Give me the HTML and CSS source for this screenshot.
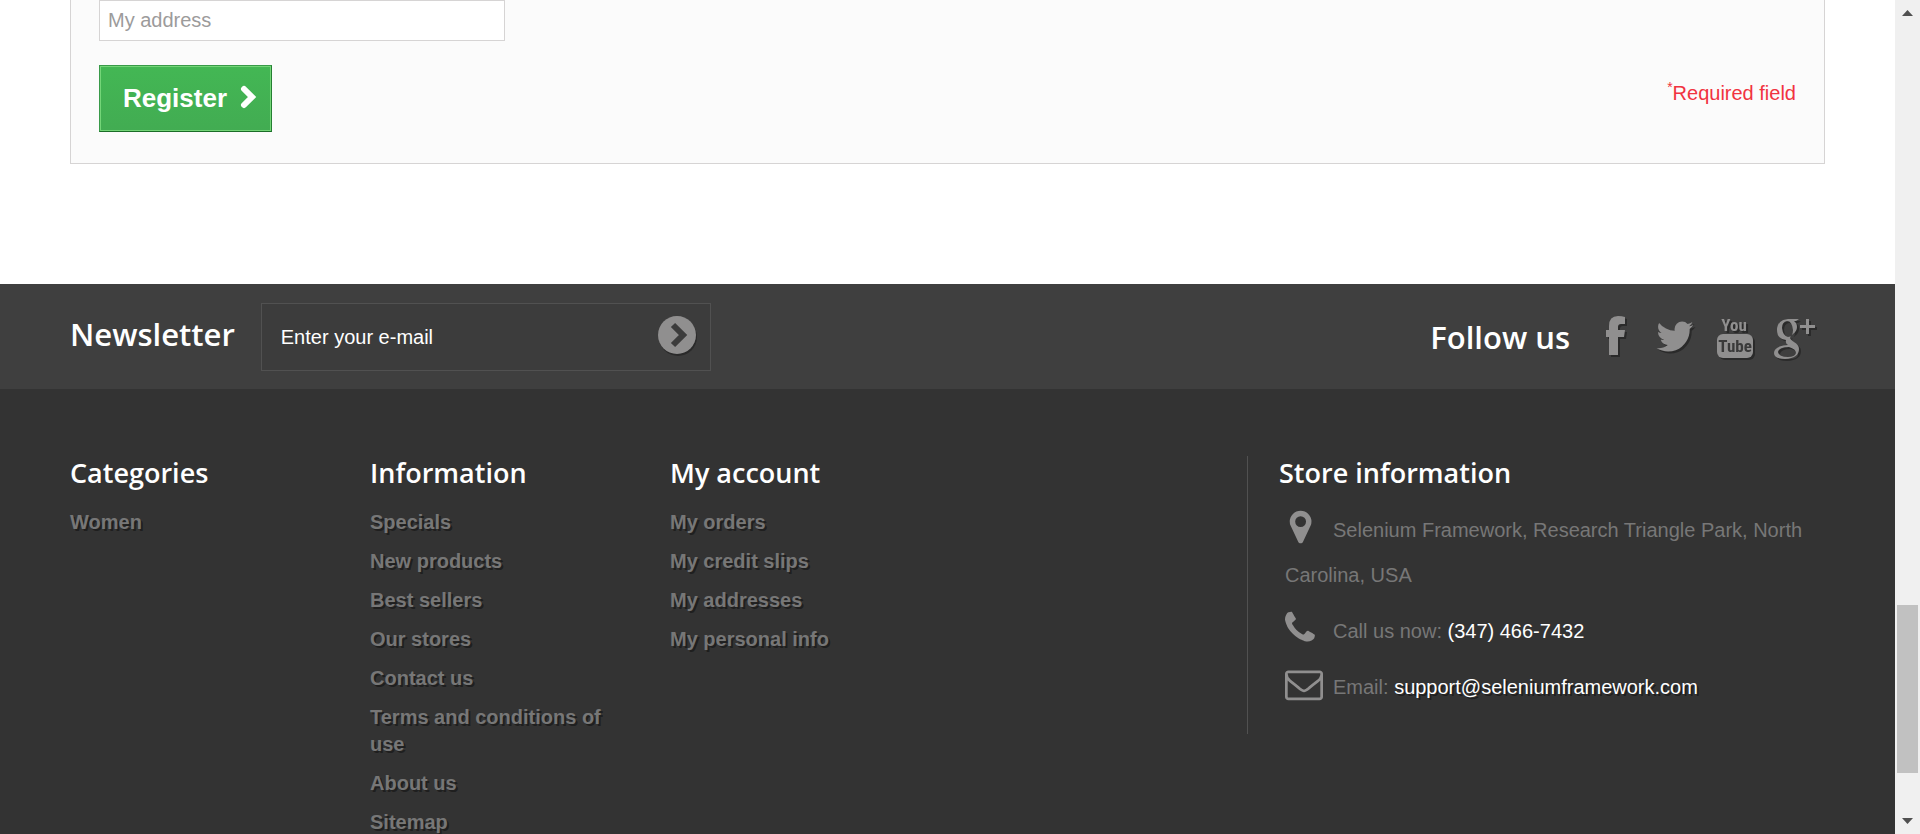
FILE: index.html
```html
<!DOCTYPE html>
<html lang="en">
<head>
<meta charset="utf-8">
<title>Create an account</title>
<link rel="stylesheet" href="styles.css">
</head>
<body>
<div class="page">
  <main class="content">
    <form class="account-form">
      <input class="field" type="text" placeholder="My address" aria-label="Address alias">
      <div class="submit-row">
        <button class="register" type="button">Register
          <svg class="register-icon" viewBox="0 0 20 28" aria-hidden="true"><path d="M6 6l8 8-8 8"/></svg>
        </button>
        <p class="required"><sup>*</sup>Required field</p>
      </div>
    </form>
  </main>
  <footer class="footer">
    <div class="band">
      <form class="newsletter">
        <label class="band-title" for="email">Newsletter</label>
        <div class="newsletter-box">
          <input class="newsletter-input" id="email" type="text" value="Enter your e-mail">
          <button class="newsletter-go" type="button" aria-label="Subscribe">
            <svg class="go-icon" viewBox="0 0 38 38" aria-hidden="true"><circle cx="19" cy="19" r="19"/><path d="M15 9l10 10-10 10"/></svg>
          </button>
        </div>
      </form>
      <div class="social">
        <h2 class="band-title">Follow us</h2>
        <a class="social-link" href="#" aria-label="Facebook"><svg class="social-icon" viewBox="0 0 42 46" aria-hidden="true"><path d="M31 3v7h-4q-3 0-3 3v3h7l-1 7h-6v18h-9v-18h-3v-7h3v-4q0-10 9-10 4 0 7 1z"/></svg></a>
        <a class="social-link" href="#" aria-label="Twitter"><svg class="social-icon" viewBox="0 -64 1792 1963" aria-hidden="true"><path d="M1684 408q-67 98-162 167 1 14 1 42 0 130-38 259.5t-115.5 248.5-184.5 210.5-258 146-323 54.5q-271 0-496-145 35 4 78 4 225 0 401-138-105-2-188-64.5t-114-159.5q33 5 61 5 43 0 85-11-112-23-185.5-111.5t-73.5-205.5v-4q68 38 146 41-66-44-105-115t-39-154q0-88 44-163 121 149 294.5 238.5t371.5 99.5q-8-38-8-74 0-134 94.5-228.5t228.5-94.5q140 0 236 102 109-21 205-78-37 115-142 178 93-10 186-50z"/></svg></a>
        <a class="social-link" href="#" aria-label="YouTube"><svg class="social-icon" viewBox="0 0 42 46" aria-hidden="true"><text class="tube-text" x="20" y="17">You</text><rect x="3" y="20" width="36" height="24" rx="6"/><text class="tube-text tube-dark" x="21" y="38">Tube</text></svg></a>
        <a class="social-link" href="#" aria-label="Google Plus"><svg class="social-icon" viewBox="0 0 42 46" aria-hidden="true"><path transform="translate(-2 0)" fill-rule="evenodd" d="M27 5h-11q-11 1-11 11 0 9 9 10-1 3 2 5-14 1-14 8 0 6 11 6 14-1 14-10 0-4-5-7-4-3-4-4 0-2 3-4 4-3 4-7 0-4-3-6h2zM15 7q5 0 6 9 0 7-5 7-5-1-6-9 0-6 5-7zM17 33q7 2 7 6-1 4-8 4-9 0-10-5 1-5 11-5z"/><path d="M32 5h3v6h6v3h-6v6h-3v-6h-6v-3h6z"/></svg></a>
      </div>
    </div>
    <div class="links">
      <section class="column">
        <h2 class="title">Categories</h2>
        <ul class="list"><li><a href="#">Women</a></li></ul>
      </section>
      <section class="column">
        <h2 class="title">Information</h2>
        <ul class="list">
          <li><a href="#">Specials</a></li>
          <li><a href="#">New products</a></li>
          <li><a href="#">Best sellers</a></li>
          <li><a href="#">Our stores</a></li>
          <li><a href="#">Contact us</a></li>
          <li><a href="#">Terms and conditions of use</a></li>
          <li><a href="#">About us</a></li>
          <li><a href="#">Sitemap</a></li>
        </ul>
      </section>
      <section class="column">
        <h2 class="title">My account</h2>
        <ul class="list">
          <li><a href="#">My orders</a></li>
          <li><a href="#">My credit slips</a></li>
          <li><a href="#">My addresses</a></li>
          <li><a href="#">My personal info</a></li>
        </ul>
      </section>
      <section class="store">
        <h2 class="title">Store information</h2>
        <ul class="store-list">
          <li><svg class="store-icon" viewBox="160 0 1792 1792" aria-hidden="true"><path d="M1152 640q0-106-75-181t-181-75-181 75-75 181 75 181 181 75 181-75 75-181zm256 0q0 109-33 179l-364 774q-16 33-47.500 52t-67.500 19-67.500-19-46.500-52l-365-774q-33-70-33-179 0-212 150-362t362-150 362 150 150 362z"/></svg>Selenium Framework, Research Triangle Park, North Carolina, USA</li>
          <li><svg class="store-icon" viewBox="192 0 1792 1792" aria-hidden="true"><path d="M1600 1240q0 27-10 70.500t-21 68.500q-21 50-122 106-94 51-186 51-27 0-53-3.500t-57.500-12.500-47-14.500-55.500-20.500-49-18q-98-35-175-83-127-79-264-216t-216-264q-48-77-83-175-3-9-18-49t-20.500-55.500-14.500-47-12.500-57.500-3.500-53q0-92 51-186 56-101 106-122 25-11 68.500-21t70.500-10q14 0 21 3 18 6 53 76 11 19 30 54t35 63.500 31 53.500q3 4 17.500 25t21.500 35.500 7 28.500q0 20-28.500 50t-62 55-62 53-28.500 46q0 9 5 22.500t8.500 20.500 14 24 11.500 19q76 137 174 235t235 174q2 1 19 11.500t24 14 20.500 8.500 22.500 5q18 0 46-28.500t53-62 55-62 50-28.500q14 0 28.500 7t35.500 21.500 25 17.500q25 15 53.500 31t63.500 35 54 30q70 35 76 53 3 7 3 21z"/></svg>Call us now: <span class="phone">(347) 466-7432</span></li>
          <li><svg class="store-icon" viewBox="0 0 1792 1792" aria-hidden="true"><path d="M1664 1504v-768q-32 36-69 66-268 206-426 338-51 43-83 67t-86.500 48.500-102.500 24.500h-2q-48 0-102.500-24.500t-86.500-48.500-83-67q-158-132-426-338-37-30-69-66v768q0 13 9.500 22.500t22.500 9.500h1472q13 0 22.500-9.500t9.500-22.500zm0-1051v-24.500l-.5-13-3-12.500-5.500-9-9-7.500-14-2.500h-1472q-13 0-22.500 9.500t-9.500 22.500q0 168 147 284 193 152 401 317 6 5 35 29.500t46 37.500 44.500 31.500 50.500 27.500 43 9h2q20 0 43-9t50.500-27.500 44.500-31.500 46-37.500 35-29.500q208-165 401-317 54-43 100.500-115.500t46.500-131.500zm128-37v1088q0 66-47 113t-113 47h-1472q-66 0-113-47t-47-113v-1088q0-66 47-113t113-47h1472q66 0 113 47t47 113z"/></svg>Email: <a class="mail" href="#">support@seleniumframework.com</a></li>
        </ul>
      </section>
    </div>
  </footer>
</div>
<div class="scrollbar" aria-hidden="true">
  <svg class="arrow" viewBox="0 0 25 25"><path d="M7 16l5.500-6 5.500 6z"/></svg>
  <div class="track"><div class="thumb"></div></div>
  <svg class="arrow" viewBox="0 0 25 25"><path d="M7 9l5.500 6 5.500-6z"/></svg>
</div>
</body>
</html>
```
FILE: styles.css
```css
* { box-sizing: border-box; }
body {
  margin: 0;
  height: 100vh;
  overflow: hidden;
  display: flex;
  background: #fff;
  color: #777;
  font: 20px/27px "Liberation Sans", Arial, sans-serif;
}
h2, p, ul { margin: 0; padding: 0; }
ul { list-style: none; }
a { color: inherit; text-decoration: none; }
button, input { font: inherit; border-radius: 0; }
.page { flex: 1; min-width: 0; display: flex; flex-direction: column; }

.content { padding: 0 70px 120px; }
.account-form {
  padding: 0 28px 31px;
  border: 1px solid #d6d4d4;
  border-top: 0;
  background: #fbfbfb;
}
.field {
  display: block;
  width: 406px;
  height: 41px;
  padding: 0 8px;
  border: 1px solid #d6d4d4;
  background: #fff;
  color: #9c9b9b;
}
.field::placeholder { color: #9c9b9b; opacity: 1; }
.submit-row {
  display: flex;
  justify-content: space-between;
  align-items: flex-start;
  margin-top: 24px;
}
.register {
  display: flex;
  align-items: center;
  gap: 12px;
  height: 67px;
  padding: 0 14px 0 23px;
  border: 1px solid;
  border-color: #399a49 #247f32 #1a6d27 #399a49;
  background: linear-gradient(#43b754, #42ac52);
  box-shadow: inset 0 0 0 1px #74d578;
  color: #fff;
  font-size: 26px;
  font-weight: 700;
}
.register-icon { width: 20px; height: 28px; margin: 0 -1px 4px; fill: none; stroke: #fff; stroke-width: 6; stroke-linecap: round; }
.required { margin-top: 15px; color: #f13340; }
.required sup { font-size: 14px; line-height: 0; }

.footer { flex: 1; background: #333; }
.band {
  display: flex;
  justify-content: space-between;
  align-items: center;
  padding: 19px 70px 18px;
  background: #3f3f3f;
}
.band-title, .title {
  color: #fff;
  font-family: "Open Sans", sans-serif;
  font-weight: 600;
}
.band-title { font-size: 31px; line-height: 40px; }
.newsletter { display: flex; align-items: center; gap: 26px; }
.newsletter .band-title { padding-bottom: 6px; }
.newsletter-box {
  display: flex;
  align-items: center;
  width: 450px;
  height: 68px;
  padding: 0 14px 0 19px;
  border: 1px solid #515151;
  background: #3c3c3c;
}
.newsletter-input { flex: 1; min-width: 0; padding: 0; border: 0; background: none; color: #fff; }
.newsletter-go { display: flex; padding: 0 0 4px; border: 0; background: none; }
.go-icon { width: 38px; height: 38px; fill: #908f8f; overflow: visible; filter: drop-shadow(1px 2px 0 #2a2a2a); }
.go-icon path { fill: none; stroke: #3c3c3c; stroke-width: 6; }
.social { display: flex; align-items: center; gap: 18px; padding-right: 9px; }
.social .band-title { margin-right: 6px; }
.social-link { display: flex; }
.social-icon { width: 42px; height: 46px; fill: #908f8f; filter: drop-shadow(2px 2px 0 #2a2a2a); }
.tube-text {
  font: 700 17px "Roboto Condensed", "Liberation Sans Narrow", "Open Sans Condensed", "Liberation Sans", sans-serif;
  text-anchor: middle;
}
.tube-dark { fill: #3a3a3a; }

.links { display: flex; align-items: flex-start; padding: 67px 70px 0; }
.column { width: 300px; padding-right: 60px; }
.title { font-size: 27px; line-height: 34px; }
.list { padding-top: 19px; font-weight: 700; }
.list li { padding-bottom: 12px; }
.list a { text-shadow: 2px 2px 0 rgba(0, 0, 0, .4); }
.store {
  width: 578px;
  margin-left: auto;
  min-height: 278px;
  padding-left: 31px;
  border-left: 1px solid #515151;
}
.store-list { padding: 18px 20px 0 6px; line-height: 45px; }
.store-list li { padding-bottom: 11px; }
.store-icon { width: 38px; height: 38px; margin-right: 10px; vertical-align: -9px; fill: #908f8f; }
.phone, .mail { color: #fff; }
.mail { text-shadow: 2px 2px 0 rgba(0, 0, 0, .4); }

.scrollbar { width: 25px; display: flex; flex-direction: column; background: #f0f0f0; }
.arrow { width: 25px; height: 25px; fill: #505050; }
.track { flex: 1; display: grid; grid-template-rows: 580fr 168fr 36fr; padding: 0 2px; }
.thumb { grid-row: 2; background: #c1c1c1; }
```
